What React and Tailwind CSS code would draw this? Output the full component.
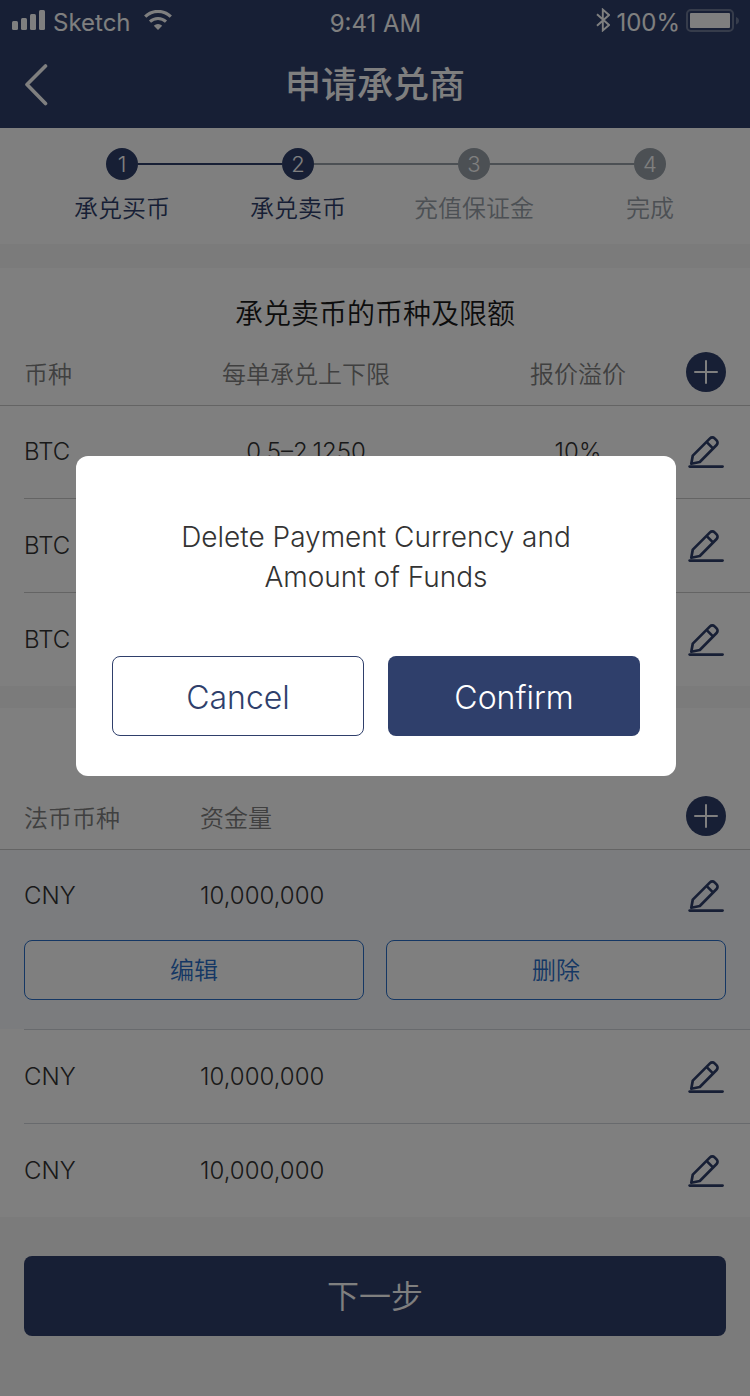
const NAVY = 'text-[#2f3f6b]';

function SignalIcon() {
  return (
    <svg width="34" height="20" viewBox="0 0 34 20" fill="currentColor" aria-hidden="true">
      <rect x="0" y="11" width="6" height="9" rx="1.5" />
      <rect x="9" y="8" width="6" height="12" rx="1.5" />
      <rect x="18" y="4" width="6" height="16" rx="1.5" />
      <rect x="27" y="0" width="6" height="20" rx="1.5" />
    </svg>
  );
}

function WifiIcon() {
  return (
    <svg width="28" height="20" viewBox="0 0 28 20" fill="none" stroke="currentColor" aria-hidden="true">
      <path d="M1.2 6.6a18.4 18.4 0 0 1 25.6 0" strokeWidth="3.2" />
      <path d="M6 11.6a11.6 11.6 0 0 1 16 0" strokeWidth="3" />
      <path d="M14 20l-4.2-4.3a6.2 6.2 0 0 1 8.4 0z" fill="currentColor" stroke="none" />
    </svg>
  );
}

function BluetoothIcon() {
  return (
    <svg width="14" height="24" viewBox="0 0 14 24" fill="none" stroke="currentColor" strokeWidth="1.9" aria-hidden="true">
      <path d="M1 6.2l12 10.8-6.2 5.4V1.6L13 7 1 17.8" />
    </svg>
  );
}

function BatteryIcon() {
  return (
    <svg width="53" height="23" viewBox="0 0 53 23" fill="none" aria-hidden="true">
      <rect x="1" y="1" width="46" height="21" rx="4" stroke="#fff" strokeOpacity="0.3" strokeWidth="2" />
      <rect x="4" y="4" width="40" height="15" rx="1" fill="#fff" />
      <path d="M50 8c4 1.5 4 6 0 7.500z" fill="#fff" fillOpacity="0.3" />
    </svg>
  );
}

function PencilIcon() {
  return (
    <svg width="36" height="34" viewBox="0 0 36 34" fill="none" stroke="currentColor" strokeWidth="2.700" strokeLinejoin="round" aria-hidden="true">
      <path d="M3.300 28.800L4.800 20.600 22 3.400a3.300 3.300 0 0 1 4.600 0l2 2a3.300 3.300 0 0 1 0 4.600L11.800 27z" />
      <path d="M18.500 6.900l6.700 6.700" />
      <path d="M1.700 31.600h32.800" strokeLinecap="round" strokeWidth="2.800" />
    </svg>
  );
}

function PlusButton({ label }) {
  return (
    <button type="button" aria-label={label} className="flex size-10 items-center justify-center rounded-full bg-[#2f3f6b] text-white">
      <svg width="24" height="24" viewBox="0 0 24 24" stroke="currentColor" strokeWidth="2" strokeLinecap="round" aria-hidden="true">
        <path d="M12 1v22M1 12h22" />
      </svg>
    </button>
  );
}

function EditButton({ label }) {
  return (
    <button type="button" aria-label={label} className={`ml-0.5 block ${NAVY}`}>
      <PencilIcon />
    </button>
  );
}

const steps = [
  { n: 1, label: '承兑买币', done: true },
  { n: 2, label: '承兑卖币', done: true },
  { n: 3, label: '充值保证金', done: false },
  { n: 4, label: '完成', done: false },
];

function lineColor(from, to) {
  if (!from || !to) return 'bg-transparent';
  return to.done ? 'bg-[#2f3f6b]' : 'bg-[#99a1a9]';
}

function Stepper() {
  return (
    <ol className="grid grid-cols-4 bg-white pt-5 pr-3 pb-[18px] pl-[34px]">
      {steps.map((s, i) => (
        <li key={s.n} className="flex flex-col items-center">
          <div className="flex w-full items-center">
            <span className={`h-0.5 flex-1 ${lineColor(steps[i - 1], s)}`} />
            <span className={`flex size-8 items-center justify-center rounded-full text-[22px] text-white ${s.done ? 'bg-[#2f3f6b]' : 'bg-[#99a1a9]'}`}>
              {s.n}
            </span>
            <span className={`h-0.5 flex-1 ${lineColor(s, steps[i + 1])}`} />
          </div>
          <span className={`mt-3 h-[34px] text-2xl leading-[34px] ${s.done ? NAVY : 'text-[#99a1a9]'}`}>{s.label}</span>
        </li>
      ))}
    </ol>
  );
}

const coins = [
  { id: 1, coin: 'BTC', range: '0.5–2.1250', premium: '10%' },
  { id: 2, coin: 'BTC' },
  { id: 3, coin: 'BTC' },
];

const funds = [
  { id: 1, coin: 'CNY', amount: '10,000,000', open: true },
  { id: 2, coin: 'CNY', amount: '10,000,000' },
  { id: 3, coin: 'CNY', amount: '10,000,000' },
];

const HEAD_CELL = 'h-[66px] border-b border-[#c8c8c8] pt-1 font-[350]';
const HEAD_ACTION = 'border-b border-[#c8c8c8] pr-6 pb-0.5';

function CoinTable() {
  return (
    <table className="w-full table-fixed border-separate border-spacing-0 text-2xl">
      <colgroup>
        <col className="w-[142px]" />
        <col />
        <col className="w-[216px]" />
        <col className="w-[64px]" />
      </colgroup>
      <thead className="text-[#808080]">
        <tr>
          <th className={`${HEAD_CELL} pl-6 text-left`}>币种</th>
          <th className={`${HEAD_CELL} text-center`}>每单承兑上下限</th>
          <th className={`${HEAD_CELL} text-center`}>报价溢价</th>
          <th className={HEAD_ACTION}>
            <PlusButton label="添加币种" />
          </th>
        </tr>
      </thead>
      <tbody className="text-[#333]">
        {coins.map((c, i) => {
          const edge = i > 0 ? 'border-t border-[#c8c8c8]' : '';
          return (
            <tr key={c.id}>
              <td className="pl-6">
                <div className={`flex items-center ${i > 0 ? 'h-[94px]' : 'h-[92px]'} ${edge}`}>{c.coin}</div>
              </td>
              <td className={`text-center ${edge}`}>{c.range}</td>
              <td className={`text-center ${edge}`}>{c.premium}</td>
              <td className={edge}>
                <EditButton label="编辑币种" />
              </td>
            </tr>
          );
        })}
      </tbody>
    </table>
  );
}

function RowAction({ children }) {
  return (
    <button type="button" className="h-[60px] rounded-lg border border-[#2a6fc9] bg-white pt-0.5 text-2xl font-[350] text-[#2a6fc9]">
      {children}
    </button>
  );
}

function FundRows({ fund, first }) {
  const edge = first ? 'pt-0.5' : 'border-t border-[#d0d4da]';
  return (
    <>
      <tr className={fund.open ? 'bg-[#f6f8fd]' : ''}>
        <td className="pl-6">
          <div className={`flex items-center ${first ? 'h-[90px]' : 'h-[94px]'} ${edge}`}>{fund.coin}</div>
        </td>
        <td className={edge}>{fund.amount}</td>
        <td className={edge}>
          <EditButton label="编辑资金量" />
        </td>
      </tr>
      {fund.open && (
        <tr className="bg-[#f6f8fd]">
          <td colSpan={3} className="px-6 pb-[29px]">
            <div className="grid grid-cols-2 gap-[22px]">
              <RowAction>编辑</RowAction>
              <RowAction>删除</RowAction>
            </div>
          </td>
        </tr>
      )}
    </>
  );
}

function FundTable() {
  return (
    <table className="w-full table-fixed border-separate border-spacing-0 text-2xl">
      <colgroup>
        <col className="w-[200px]" />
        <col />
        <col className="w-[64px]" />
      </colgroup>
      <thead className="text-[#808080]">
        <tr>
          <th className={`${HEAD_CELL} pl-6 text-left`}>法币币种</th>
          <th className={`${HEAD_CELL} text-left`}>资金量</th>
          <th className={HEAD_ACTION}>
            <PlusButton label="添加法币" />
          </th>
        </tr>
      </thead>
      <tbody className="text-[#333]">
        {funds.map((f, i) => (
          <FundRows key={f.id} fund={f} first={i === 0} />
        ))}
      </tbody>
    </table>
  );
}

function ConfirmDialog() {
  return (
    <div className="absolute inset-0 bg-black/50 pt-[456px] pr-[74px] pl-[76px]">
      <div role="dialog" aria-modal="true" aria-labelledby="dialog-title" className="mx-auto max-w-[600px] rounded-xl bg-white px-9 pt-[61px] pb-10">
        <h2 id="dialog-title" className="mx-auto max-w-[440px] text-center text-[28px] leading-10 font-[350] text-[#333]">
          Delete Payment Currency and Amount of Funds
        </h2>
        <div className="mt-[59px] grid grid-cols-2 gap-6 text-[32px] font-[350]">
          <button type="button" className={`h-20 rounded-lg border border-[#2f3f6b] bg-white pt-1 ${NAVY}`}>
            Cancel
          </button>
          <button type="button" className="h-20 rounded-lg bg-[#2f3f6b] pt-1 text-white">
            Confirm
          </button>
        </div>
      </div>
    </div>
  );
}

export default function App() {
  return (
    <div className="relative min-h-screen bg-[#f7f7f7] font-['Inter','Noto_Sans_CJK_SC',sans-serif] font-[350]">
      <header className="bg-[#2f3f6b] text-white">
        <div className="grid h-10 grid-cols-3 items-center pr-[11px] pl-3 text-2xl font-normal">
          <div className="flex items-center gap-[7px]">
            <SignalIcon />
            <span className="mt-1.5">Sketch</span>
            <span className="ml-1.5">
              <WifiIcon />
            </span>
          </div>
          <div className="mt-2 text-center">9:41 AM</div>
          <div className="flex items-center justify-end gap-1.5">
            <BluetoothIcon />
            <span className="mt-1.5">100%</span>
            <BatteryIcon />
          </div>
        </div>
        <div className="grid h-[88px] grid-cols-[48px_1fr_48px] items-center px-6 pt-0.5">
          <button type="button" aria-label="返回" className="block">
            <svg width="24" height="42" viewBox="0 0 24 42" fill="none" stroke="currentColor" strokeWidth="3.600" strokeLinecap="round" strokeLinejoin="round" aria-hidden="true">
              <path d="M21.500 2L3 20.500 21.500 39.500" />
            </svg>
          </button>
          <h1 className="text-center text-4xl font-medium">申请承兑商</h1>
        </div>
      </header>

      <Stepper />

      <main>
        <section className="mt-6 bg-white pt-4">
          <h2 className="h-14 text-center text-[28px] leading-[60px] text-[#1a1a1a]">承兑卖币的币种及限额</h2>
          <CoinTable />
        </section>
        <section className="mt-[22px] bg-white pt-[76px]">
          <FundTable />
        </section>
        <div className="px-6 pt-[39px] pb-[60px]">
          <button type="button" className="h-20 w-full rounded-lg bg-[#2f3f6b] pt-0.5 text-[32px] font-[350] text-white">
            下一步
          </button>
        </div>
      </main>

      <ConfirmDialog />
    </div>
  );
}
